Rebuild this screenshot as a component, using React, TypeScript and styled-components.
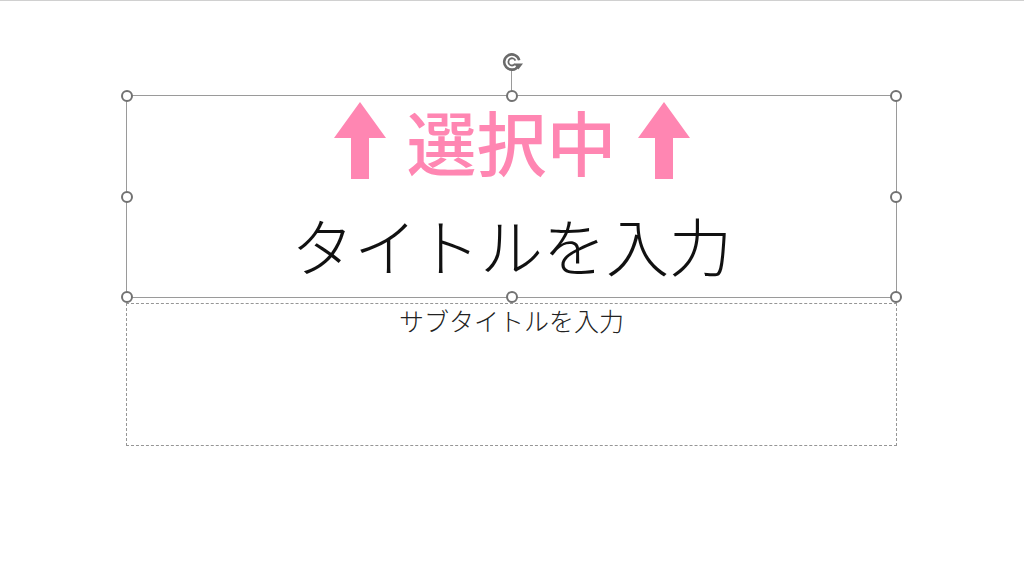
import React from "react";
import styled, { createGlobalStyle } from "styled-components";

const Global = createGlobalStyle`
  html, body { margin: 0; padding: 0; background: #ffffff; }
  body { font-family: "Noto Sans CJK JP", "Noto Sans", sans-serif; }
  #root { width: 1024px; height: 576px; overflow: hidden; }
`;

const Page = styled.div`
  width: 1024px;
  height: 576px;
  box-sizing: border-box;
  border-top: 1px solid #d0d0d0;
  display: flex;
  flex-direction: column;
  padding: 94px 0 0 126px;
  gap: 5px;
`;

const Frame = styled.div<{ $dashed?: boolean; $h: number }>`
  position: relative;
  width: 771px;
  height: ${(p) => p.$h}px;
  box-sizing: border-box;
  border: ${(p) => (p.$dashed ? "1px dashed #969696" : "1px solid #9a9a9a")};
  display: flex;
  flex-direction: column;
  align-items: center;
`;

const Handle = styled.div<{ $x: string; $y: string }>`
  position: absolute;
  left: ${(p) => p.$x};
  top: ${(p) => p.$y};
  width: 8px;
  height: 8px;
  margin: -6px 0 0 -6px;
  border: 2px solid #727272;
  border-radius: 50%;
  background: #fff;
  z-index: 2;
`;

const RotateStem = styled.div`
  position: absolute;
  left: 50%;
  top: -26px;
  width: 1px;
  height: 26px;
  margin-left: -1px;
  background: #9a9a9a;
`;

const RotateIcon = styled.svg`
  position: absolute;
  left: 50%;
  top: -45px;
  margin-left: -12px;
  width: 24px;
  height: 24px;
`;

const PinkRow = styled.div`
  display: flex;
  align-items: center;
  gap: 21px;
  margin-top: 6px;
  height: 77px;
`;

const PinkText = styled.div`
  font-family: "Noto Sans CJK JP", sans-serif;
  font-weight: 500;
  font-size: 70px;
  line-height: 77px;
  color: #ff86b2;
`;

const Title = styled.div`
  font-family: "Noto Sans CJK JP", sans-serif;
  font-weight: 200;
  font-size: 63px;
  line-height: 70px;
  color: #111;
  margin-top: 30px;
`;

const Subtitle = styled.div`
  font-family: "Noto Sans CJK JP", sans-serif;
  font-weight: 300;
  font-size: 25px;
  line-height: 32px;
  color: #222;
  margin-top: 0px;
`;

const Arrow = () => (
  <svg width="52" height="77" viewBox="0 0 52 77">
    <polygon points="26,0 52,36 35,36 35,77 17,77 17,36 0,36" fill="#ff86b2" />
  </svg>
);

const handles: [string, string][] = [
  ["0%", "0%"],
  ["50%", "0%"],
  ["100%", "0%"],
  ["0%", "50%"],
  ["100%", "50%"],
  ["0%", "100%"],
  ["50%", "100%"],
  ["100%", "100%"],
];

export default function App() {
  return (
    <>
      <Global />
      <Page>
        <Frame $h={203}>
          <RotateStem />
          <RotateIcon viewBox="0 0 24 24">
            <path
              d="M18.2 15.2 A7.6 7.6 0 1 1 19.2 9.2"
              fill="none"
              stroke="#6a6a6a"
              strokeWidth="2.6"
            />
            <path
              d="M14.8 13.2 A3.6 3.6 0 1 1 15.4 9.6"
              fill="none"
              stroke="#6a6a6a"
              strokeWidth="1.8"
            />
            <polygon points="13.8,12.6 23,12.6 18.4,18.4" fill="#6a6a6a" />
          </RotateIcon>
          {handles.map(([x, y], i) => (
            <Handle key={i} $x={x} $y={y} />
          ))}
          <PinkRow>
            <Arrow />
            <PinkText>選択中</PinkText>
            <Arrow />
          </PinkRow>
          <Title>タイトルを入力</Title>
        </Frame>
        <Frame $dashed $h={143}>
          <Subtitle>サブタイトルを入力</Subtitle>
        </Frame>
      </Page>
    </>
  );
}
